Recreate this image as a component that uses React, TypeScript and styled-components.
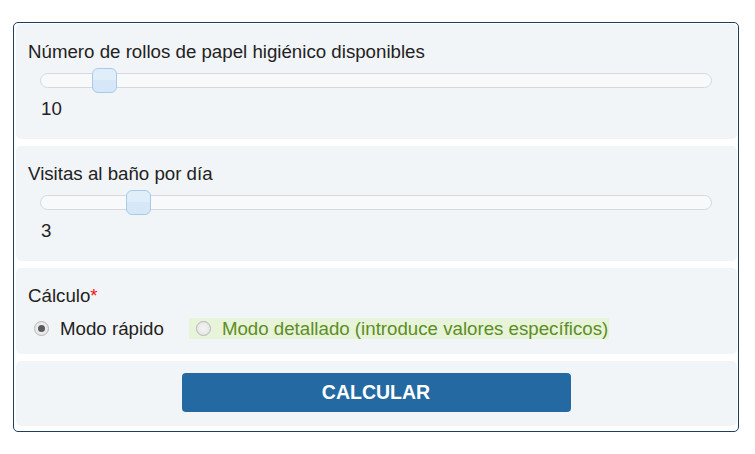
import React from 'react';
import styled, { createGlobalStyle } from 'styled-components';

const GlobalStyle = createGlobalStyle`
  body {
    margin: 0;
    background: #ffffff;
    font-family: "Liberation Sans", Arial, sans-serif;
    color: #222222;
  }
`;

const Page = styled.div`
  padding: 22px 16px 0 13px;
`;

const Form = styled.div`
  border: 1px solid #1b3f5e;
  border-radius: 5px;
  padding: 1px 1px 5px 2px;
  display: flex;
  flex-direction: column;
  gap: 7px;
`;

const Section = styled.div<{ $h: number }>`
  background: #f2f5f8;
  border-radius: 5px;
  height: ${(p) => p.$h}px;
  box-sizing: border-box;
  padding: 18px 12px 0 12px;
`;

const Label = styled.div`
  font-size: 18.7px;
  line-height: 20px;
`;

const Required = styled.span`
  color: #ee1111;
`;

const Track = styled.div`
  position: relative;
  margin: 11px 13px 0 12px;
  height: 15px;
  box-sizing: border-box;
  border: 1px solid #d6d8db;
  border-radius: 8px;
  background: #f8f9fb;
`;

const Thumb = styled.div`
  position: absolute;
  top: -6px;
  width: 25px;
  height: 25px;
  box-sizing: border-box;
  border: 1px solid #a9cbea;
  border-radius: 6px;
  background: linear-gradient(#e0eefa 0 50%, #d6e8f7 50% 100%);
`;

const Value = styled.div`
  font-size: 18.7px;
  line-height: 20px;
  margin: 11px 0 0 13px;
`;

const Options = styled.div`
  display: flex;
  align-items: center;
  margin-top: 12px;
  gap: 24px;
`;

const Option = styled.label<{ $hl?: boolean }>`
  display: flex;
  align-items: center;
  gap: 11px;
  font-size: 18.7px;
  line-height: 21px;
  padding: 0 1px 0 ${(p) => (p.$hl ? 7 : 6)}px;
  background: ${(p) => (p.$hl ? '#e7f4da' : 'transparent')};
  color: ${(p) => (p.$hl ? '#5d8d24' : '#222222')};
`;

const Radio = styled.span<{ $on?: boolean }>`
  width: 15px;
  height: 15px;
  box-sizing: border-box;
  border-radius: 50%;
  border: 1px solid #b5b5b5;
  background: radial-gradient(circle, #f4f4f4 0%, #e2e2e2 100%);
  display: flex;
  align-items: center;
  justify-content: center;
  &::after {
    content: '';
    width: 7px;
    height: 7px;
    border-radius: 50%;
    background: ${(p) => (p.$on ? '#5a5a5a' : 'transparent')};
  }
`;

const ButtonRow = styled.div`
  display: flex;
  justify-content: center;
  padding-top: 12px;
`;

const Button = styled.button`
  width: 389px;
  height: 39px;
  margin-right: 1px;
  border: none;
  border-radius: 4px;
  background: #2469a2;
  color: #ffffff;
  font-family: "Liberation Sans", Arial, sans-serif;
  font-weight: bold;
  font-size: 19.5px;
`;

function Slider({ pct }: { pct: number }) {
  return (
    <Track>
      <Thumb style={{ left: `${pct}%` }} />
    </Track>
  );
}

export default function App() {
  return (
    <>
      <GlobalStyle />
      <Page>
        <Form>
          <Section $h={115}>
            <Label>Número de rollos de papel higiénico disponibles</Label>
            <Slider pct={7.6} />
            <Value>10</Value>
          </Section>
          <Section $h={115}>
            <Label>Visitas al baño por día</Label>
            <Slider pct={12.7} />
            <Value>3</Value>
          </Section>
          <Section $h={86}>
            <Label>
              Cálculo<Required>*</Required>
            </Label>
            <Options>
              <Option>
                <Radio $on />
                Modo rápido
              </Option>
              <Option $hl>
                <Radio />
                Modo detallado (introduce valores específicos)
              </Option>
            </Options>
          </Section>
          <Section $h={65} style={{ padding: 0 }}>
            <ButtonRow>
              <Button>CALCULAR</Button>
            </ButtonRow>
          </Section>
        </Form>
      </Page>
    </>
  );
}
